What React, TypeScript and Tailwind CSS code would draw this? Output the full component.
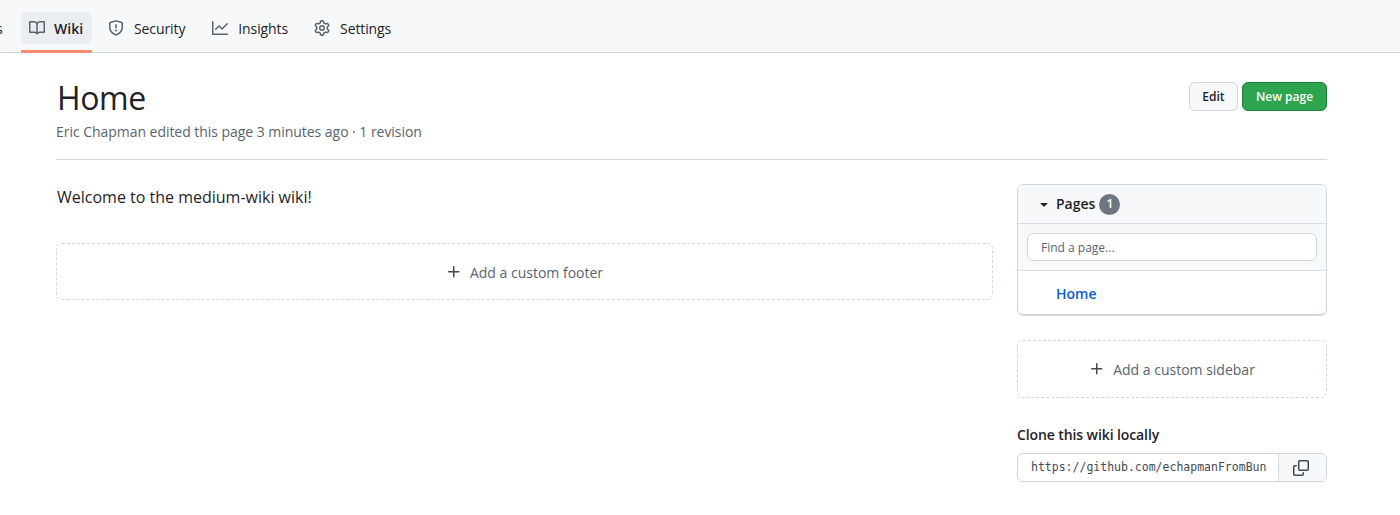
import React from "react";

const font = "font-['Open_Sans','Noto_Sans',sans-serif]";

function Octicon({ d, className }: { d: string | string[]; className?: string }) {
  const paths = Array.isArray(d) ? d : [d];
  return (
    <svg viewBox="0 0 16 16" width="16" height="16" fill="currentColor" className={className}>
      {paths.map((p, i) => (
        <path key={i} d={p} />
      ))}
    </svg>
  );
}

const book =
  "M0 1.75A.75.75 0 0 1 .75 1h4.253c1.227 0 2.317.59 3 1.501A3.743 3.743 0 0 1 11.006 1h4.245a.75.75 0 0 1 .75.75v10.5a.75.75 0 0 1-.75.75h-4.507a2.25 2.25 0 0 0-1.591.659l-.622.621a.75.75 0 0 1-1.06 0l-.622-.621A2.25 2.25 0 0 0 5.258 13H.75a.75.75 0 0 1-.75-.75Zm7.251 10.324.004-5.073-.002-2.253A2.25 2.25 0 0 0 5.003 2.5H1.5v9h3.757a3.75 3.75 0 0 1 1.994.574ZM8.755 4.75l-.004 7.322a3.752 3.752 0 0 1 1.992-.572H14.5v-9h-3.495a2.25 2.25 0 0 0-2.25 2.25Z";
const shield =
  "M7.467.133a1.748 1.748 0 0 1 1.066 0l5.25 1.68A1.75 1.75 0 0 1 15 3.48V7c0 1.566-.32 3.182-1.303 4.682-.983 1.498-2.585 2.813-5.032 3.855a1.697 1.697 0 0 1-1.33 0c-2.447-1.042-4.049-2.357-5.032-3.855C1.32 10.182 1 8.566 1 7V3.48a1.75 1.75 0 0 1 1.217-1.667Zm.61 1.429a.25.25 0 0 0-.153 0l-5.25 1.68a.25.25 0 0 0-.174.238V7c0 1.358.275 2.666 1.057 3.86.784 1.194 2.121 2.34 4.366 3.297a.196.196 0 0 0 .154 0c2.245-.956 3.582-2.104 4.366-3.298C13.225 9.666 13.5 8.36 13.5 7V3.48a.251.251 0 0 0-.174-.237l-5.25-1.68ZM8.75 4.75v3a.75.75 0 0 1-1.5 0v-3a.75.75 0 0 1 1.5 0ZM9 10.5a1 1 0 1 1-2 0 1 1 0 0 1 2 0Z";
const graph =
  "M1.5 1.75V13.5h13.75a.75.75 0 0 1 0 1.5H.75a.75.75 0 0 1-.75-.75V1.75a.75.75 0 0 1 1.5 0Zm14.28 2.53-5.25 5.25a.75.75 0 0 1-1.06 0L7 7.06 4.28 9.78a.751.751 0 0 1-1.042-.018.751.751 0 0 1-.018-1.042l3.25-3.25a.75.75 0 0 1 1.06 0L10 7.94l4.72-4.72a.751.751 0 0 1 1.042.018.751.751 0 0 1 .018 1.042Z";
const gear =
  "M8 0a8.2 8.2 0 0 1 .701.031C9.444.095 9.99.645 10.16 1.29l.288 1.107c.018.066.079.158.212.224.231.114.454.243.668.386.123.082.233.09.299.071l1.103-.303c.644-.176 1.392.021 1.82.63.27.385.506.792.704 1.218.315.675.111 1.422-.364 1.891l-.814.806c-.049.048-.098.147-.088.294.016.257.016.515 0 .772-.01.147.038.246.088.294l.814.806c.475.469.679 1.216.364 1.891a7.977 7.977 0 0 1-.704 1.217c-.428.61-1.176.807-1.82.63l-1.102-.302c-.067-.019-.177-.011-.3.071a5.909 5.909 0 0 1-.668.386c-.133.066-.194.158-.211.224l-.29 1.106c-.168.646-.715 1.196-1.458 1.26a8.006 8.006 0 0 1-1.402 0c-.743-.064-1.289-.614-1.458-1.26l-.289-1.106c-.018-.066-.079-.158-.212-.224a5.738 5.738 0 0 1-.668-.386c-.123-.082-.233-.09-.299-.071l-1.103.303c-.644.176-1.392-.021-1.82-.63a8.12 8.12 0 0 1-.704-1.218c-.315-.675-.111-1.422.363-1.891l.815-.806c.05-.048.098-.147.088-.294a6.214 6.214 0 0 1 0-.772c.01-.147-.038-.246-.088-.294l-.815-.806C.635 6.045.431 5.298.746 4.623a7.92 7.92 0 0 1 .704-1.217c.428-.61 1.176-.807 1.82-.63l1.102.302c.067.019.177.011.3-.071.214-.143.437-.272.668-.386.133-.066.194-.158.211-.224l.29-1.106C6.009.645 6.556.095 7.299.03 7.53.01 7.764 0 8 0Zm-.571 1.525c-.036.003-.108.036-.137.146l-.289 1.105c-.147.561-.549.967-.998 1.189-.173.086-.34.183-.5.29-.417.278-.97.423-1.529.27l-1.103-.303c-.109-.03-.175.016-.195.045-.22.312-.412.644-.573.99-.014.031-.021.11.059.19l.815.806c.411.406.562.957.53 1.456a4.709 4.709 0 0 0 0 .582c.032.499-.119 1.05-.53 1.456l-.815.806c-.081.08-.073.159-.059.19.162.346.353.677.573.989.02.03.085.076.195.046l1.102-.303c.56-.153 1.113-.008 1.53.27.161.107.328.204.501.29.447.222.85.629.997 1.189l.289 1.105c.029.109.101.143.137.146a6.6 6.6 0 0 0 1.142 0c.036-.003.108-.036.137-.146l.289-1.105c.147-.561.549-.967.998-1.189.173-.086.34-.183.5-.29.417-.278.97-.423 1.529-.27l1.103.303c.109.029.175-.016.195-.045.22-.313.411-.644.573-.99.014-.031.021-.11-.059-.19l-.815-.806c-.411-.406-.562-.957-.53-1.456a4.709 4.709 0 0 0 0-.582c-.032-.499.119-1.05.53-1.456l.815-.806c.081-.08.073-.159.059-.19a6.464 6.464 0 0 0-.573-.989c-.02-.03-.085-.076-.195-.046l-1.102.303c-.56.153-1.113.008-1.53-.27a4.44 4.44 0 0 0-.501-.29c-.447-.222-.85-.629-.997-1.189l-.289-1.105c-.029-.11-.101-.143-.137-.146a6.6 6.6 0 0 0-1.142 0ZM11 8a3 3 0 1 1-6 0 3 3 0 0 1 6 0ZM9.5 8a1.5 1.5 0 1 0-3.001.001A1.5 1.5 0 0 0 9.5 8Z";
const plus =
  "M7.75 2a.75.75 0 0 1 .75.75V7h4.25a.75.75 0 0 1 0 1.5H8.5v4.25a.75.75 0 0 1-1.5 0V8.5H2.75a.75.75 0 0 1 0-1.5H7V2.75A.75.75 0 0 1 7.75 2Z";
const copy = [
  "M0 6.75C0 5.784.784 5 1.75 5h1.5a.75.75 0 0 1 0 1.5h-1.5a.25.25 0 0 0-.25.25v7.5c0 .138.112.25.25.25h7.5a.25.25 0 0 0 .25-.25v-1.5a.75.75 0 0 1 1.5 0v1.5A1.75 1.75 0 0 1 9.25 16h-7.5A1.75 1.75 0 0 1 0 14.25Z",
  "M5 1.75C5 .784 5.784 0 6.75 0h7.5C15.216 0 16 .784 16 1.75v7.5A1.75 1.75 0 0 1 14.25 11h-7.5A1.75 1.75 0 0 1 5 9.25Zm1.75-.25a.25.25 0 0 0-.25.25v7.5c0 .138.112.25.25.25h7.5a.25.25 0 0 0 .25-.25v-7.5a.25.25 0 0 0-.25-.25Z",
];
const caret =
  "m4.427 7.427 3.396 3.396a.25.25 0 0 0 .354 0l3.396-3.396A.25.25 0 0 0 11.396 7H4.604a.25.25 0 0 0-.177.427Z";

function Tab({ icon, label, className }: { icon: string; label: string; className: string }) {
  return (
    <div className={`flex items-center gap-[10px] h-8 px-2 text-[#1f2328] ${className}`}>
      <Octicon d={icon} className="text-[#59636e]" />
      <span className="pt-[2px] tracking-[-0.1px]">{label}</span>
    </div>
  );
}

function AddBox({ label, className }: { label: string; className: string }) {
  return (
    <div
      className={`flex items-center justify-center gap-2 rounded-md border border-dashed border-[#d0d7de] text-sm text-[#59636e] ${className}`}
    >
      <Octicon d={plus} className="text-[#424a53]" />
      <span className="pt-[2px]">{label}</span>
    </div>
  );
}

export default function App() {
  return (
    <div className={`${font} h-[515px] w-[1400px] overflow-hidden bg-white text-[#1f2328]`}>
      {/* repo nav */}
      <div className="h-[53px] border-b border-[#d0d7de] bg-[#f6f8fa]">
        <div className="flex items-center h-[52px] pt-[4px] text-sm">
          <span className="w-[13px] -ml-[4px] pt-[2px] text-left">s</span>
          <div className="relative flex items-center gap-[9px] h-8 w-[71px] ml-[12px] px-2 rounded-md bg-[#eaeef2] font-semibold">
            <Octicon d={book} className="text-[#59636e]" />
            <span className="pt-[2px]">Wiki</span>
            <div className="absolute left-0 right-0 top-[38px] h-[3px] bg-[#fd8c73]" />
          </div>
          <Tab icon={shield} label="Security" className="ml-[8px]" />
          <Tab icon={graph} label="Insights" className="ml-[11px]" />
          <Tab icon={gear} label="Settings" className="ml-[10px]" />
        </div>
      </div>

      <div className="px-[56px] w-[1383px]">
        {/* header */}
        <div className="flex items-start justify-between h-[107px] border-b border-[#d0d7de]">
          <div>
            <h1 className="text-[32px] leading-[40px] mt-[25px] font-normal tracking-[-0.4px] pl-[1px]">Home</h1>
            <p className="text-sm leading-[20px] mt-[4px] text-[#59636e] tracking-[-0.04px]">
              Eric Chapman edited this page 3 minutes ago · 1 revision
            </p>
          </div>
          <div className="flex gap-[4px] mt-[29px] text-xs font-semibold">
            <div className="flex items-center justify-center w-[49px] h-[29px] rounded-md border border-[#d0d7de] bg-[#f6f8fa]">
              Edit
            </div>
            <div className="flex items-center justify-center w-[85px] h-[29px] rounded-md border border-[#1a7f37] bg-[#2da44e] text-white">
              New page
            </div>
          </div>
        </div>

        <div className="flex gap-[24px] mt-[24px]">
          {/* main column */}
          <div className="w-[937px]">
            <p className="text-base leading-[24px] mt-[1px] pl-[1px]">Welcome to the medium-wiki wiki!</p>
            <AddBox label="Add a custom footer" className="h-[57px] mt-[34px]" />
          </div>

          {/* sidebar */}
          <div className="w-[310px]">
            <div className="rounded-md border border-[#d0d7de] shadow-[0_1px_0_#d0d7de] overflow-hidden h-[131px]">
              <div className="flex items-center h-[39px] pl-[18px] bg-[#f6f8fa] border-b border-[#d8dee4] text-sm font-semibold">
                <Octicon d={caret} className="text-[#1f2328] mr-[4px]" />
                <span>Pages</span>
                <span className="ml-[4px] flex items-center justify-center w-[21px] h-[21px] rounded-full bg-[#6e7781] text-white text-xs">
                  1
                </span>
              </div>
              <div className="h-[47px] px-[9px] pt-[9px] bg-[#f6f8fa] border-b border-[#d8dee4]">
                <div className="flex items-center h-[28px] px-[13px] pt-[2px] rounded-md border border-[#d0d7de] bg-white text-xs text-[#59636e]">
                  Find a page...
                </div>
              </div>
              <div className="flex items-center h-[44px] pl-[38px] pt-[2px] text-sm font-semibold text-[#0a5bd8]">
                Home
              </div>
            </div>

            <AddBox label="Add a custom sidebar" className="h-[58px] mt-[25px]" />

            <h5 className="text-sm font-semibold leading-[20px] mt-[27px] tracking-[-0.1px]">Clone this wiki locally</h5>
            <div className="flex h-[29px] mt-[8px] rounded-md border border-[#d0d7de] shadow-[0_1px_0_#d0d7de33] overflow-hidden">
              <div className="flex-1 flex items-center pl-[13px] font-['DejaVu_Sans_Mono',monospace] text-[11.5px] text-[#424a53] whitespace-nowrap overflow-hidden">
                https://github.com/echapmanFromBun
              </div>
              <div className="flex items-center justify-center w-[48px] border-l border-[#d0d7de] bg-[#f6f8fa]">
                <Octicon d={copy} className="text-[#424a53] mr-[4px]" />
              </div>
            </div>
          </div>
        </div>
      </div>
    </div>
  );
}
